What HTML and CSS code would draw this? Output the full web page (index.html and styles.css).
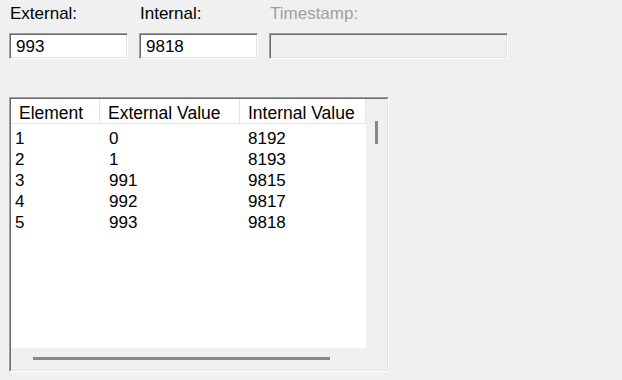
FILE: index.html
```html
<html>
    <head>
        <link rel="stylesheet" href="styles.css">
    </head>
    <body>
        <div class="page">
            <div class="fields">
                <div class="field">
                    <label>External:</label>
                    <div class="textbox short">993</div>
                </div>
                <div class="field">
                    <label>Internal:</label>
                    <div class="textbox short">9818</div>
                </div>
                <div class="field disabled">
                    <label>Timestamp:</label>
                    <div class="textbox long"></div>
                </div>
            </div>

            <div class="listframe">
                <div class="listinner">
                    <div class="listview">
                        <div class="row header">
                            <div class="cell">Element</div>
                            <div class="cell">External Value</div>
                            <div class="cell">Internal Value</div>
                        </div>
                        <div class="rows">
                            <div class="row"><div class="cell">1</div><div class="cell">0</div><div class="cell">8192</div></div>
                            <div class="row"><div class="cell">2</div><div class="cell">1</div><div class="cell">8193</div></div>
                            <div class="row"><div class="cell">3</div><div class="cell">991</div><div class="cell">9815</div></div>
                            <div class="row"><div class="cell">4</div><div class="cell">992</div><div class="cell">9817</div></div>
                            <div class="row"><div class="cell">5</div><div class="cell">993</div><div class="cell">9818</div></div>
                        </div>
                    </div>
                    <div class="vscroll"><div class="vthumb"></div></div>
                    <div class="hscroll"><div class="hthumb"></div></div>
                    <div class="corner"></div>
                </div>
            </div>
        </div>
    </body>
</html>
```

FILE: styles.css
```css
/* plain windows style dialog */
body {
    margin: 0;
    background: #f0f0f0;
    font-family: "Liberation Sans", Arial, sans-serif;
    font-size: 17px;
    color: #000;
}

.page {
    padding: 4px 0 0 9px;
}

/* top text fields */
.fields {
    display: flex;
    gap: 11px;
}

.field {
    display: flex;
    flex-direction: column;
}

.field label {
    height: 20px;
    line-height: 20px;
    padding-left: 1px;
    margin-bottom: 9px;
}

.field.disabled label {
    color: #a0a0a0;
}

.textbox {
    box-sizing: border-box;
    height: 26px;
    border: 1px solid;
    border-color: #a0a0a0 #ffffff #ffffff #a0a0a0;
    box-shadow: inset 1px 1px #696969, inset -1px -1px #e3e3e3;
    background: #fff;
    padding: 3px 0 0 6px;
    line-height: 20px;
}

.textbox.short {
    width: 119px;
}

.textbox.long {
    width: 239px;
}

.field.disabled .textbox {
    background: #f0f0f0;
}

/* list view */
.listframe {
    box-sizing: border-box;
    width: 380px;
    height: 275px;
    margin-top: 38px;
    border: 1px solid;
    border-color: #a0a0a0 #ffffff #ffffff #a0a0a0;
}

.listinner {
    box-sizing: border-box;
    height: 100%;
    border: 1px solid;
    border-color: #696969 #e3e3e3 #e3e3e3 #696969;
    display: grid;
    grid-template-columns: 1fr 21px;
    grid-template-rows: 1fr 22px;
}

.listview {
    background: #fff;
    overflow: hidden;
}

.row {
    display: grid;
    grid-template-columns: 89px 140px 126px;
    line-height: 21px;
}

.row .cell {
    padding-left: 8px;
    white-space: nowrap;
}

.row .cell:first-child {
    padding-left: 4px;
}

.row .cell:nth-child(2) {
    padding-left: 9px;
}

.row.header {
    height: 24px;
    border-bottom: 1px solid #e5e5e5;
    font-size: 17.5px;
}

.row.header .cell {
    box-sizing: border-box;
    padding-top: 4px;
    padding-left: 8px;
    line-height: 20px;
    border-right: 1px solid #e5e5e5;
}

.rows {
    padding-top: 4px;
}

.vscroll,
.hscroll,
.corner {
    background: #f0f0f0;
}

.vthumb {
    width: 3px;
    height: 23px;
    margin: 22px 0 0 9px;
    background: #888;
}

.hthumb {
    width: 297px;
    height: 3px;
    margin: 9px 0 0 22px;
    background: #888;
}
```
